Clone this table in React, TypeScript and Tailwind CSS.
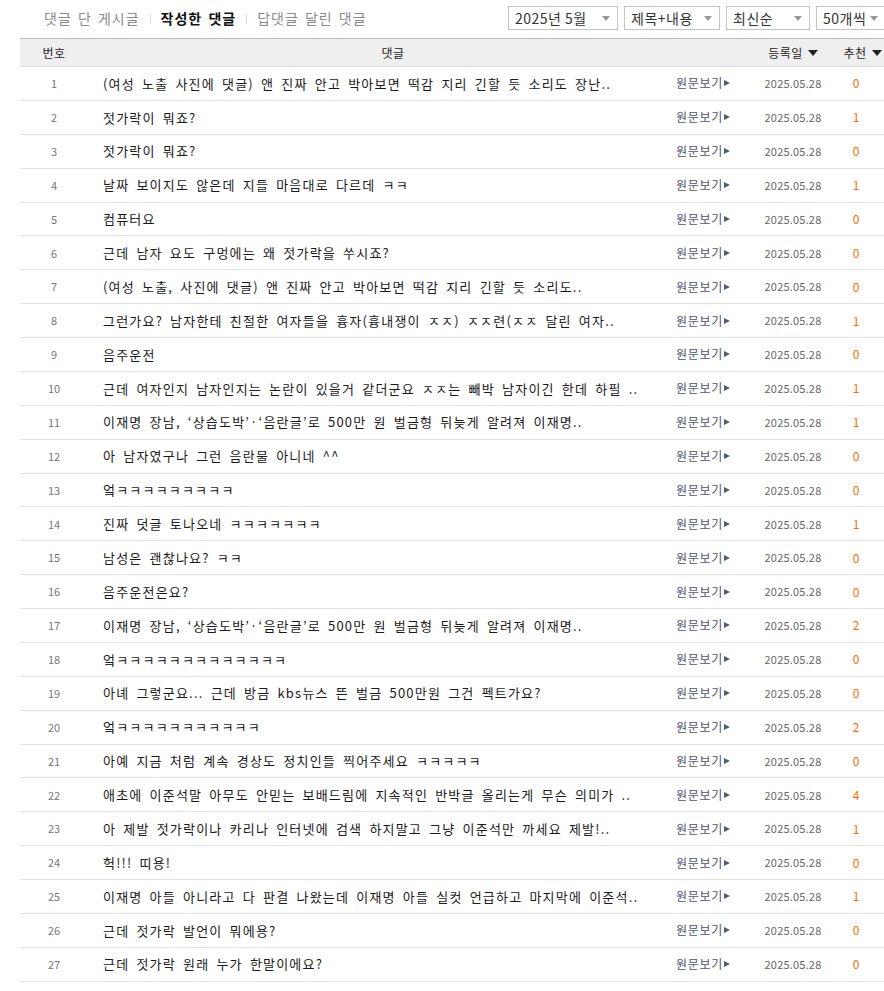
const rows: [string, number][] = [
  ['(여성 노출 사진에 댓글) 앤 진짜 안고 박아보면 떡감 지리 긴할 듯 소리도 장난..', 0],
  ['젓가락이 뭐죠?', 1],
  ['젓가락이 뭐죠?', 0],
  ['날짜 보이지도 않은데 지들 마음대로 다르데 ㅋㅋ', 1],
  ['컴퓨터요', 0],
  ['근데 남자 요도 구멍에는 왜 젓가락을 쑤시죠?', 0],
  ['(여성 노출, 사진에 댓글) 앤 진짜 안고 박아보면 떡감 지리 긴할 듯 소리도..', 0],
  ['그런가요? 남자한테 친절한 여자들을 흉자(흉내쟁이 ㅈㅈ) ㅈㅈ련(ㅈㅈ 달린 여자..', 1],
  ['음주운전', 0],
  ['근데 여자인지 남자인지는 논란이 있을거 같더군요 ㅈㅈ는 빼박 남자이긴 한데 하필 ..', 1],
  ['이재명 장남, ‘상습도박’·‘음란글’로 500만 원 벌금형 뒤늦게 알려져 이재명..', 1],
  ['아 남자였구나 그런 음란물 아니네 ^^', 0],
  ['엌ㅋㅋㅋㅋㅋㅋㅋㅋㅋ', 0],
  ['진짜 덧글 토나오네 ㅋㅋㅋㅋㅋㅋㅋ', 1],
  ['남성은 괜찮나요? ㅋㅋ', 0],
  ['음주운전은요?', 0],
  ['이재명 장남, ‘상습도박’·‘음란글’로 500만 원 벌금형 뒤늦게 알려져 이재명..', 2],
  ['엌ㅋㅋㅋㅋㅋㅋㅋㅋㅋㅋㅋㅋㅋ', 0],
  ['아녜 그렇군요... 근데 방금 kbs뉴스 뜬 벌금 500만원 그건 펙트가요?', 0],
  ['엌ㅋㅋㅋㅋㅋㅋㅋㅋㅋㅋㅋ', 2],
  ['아예 지금 처럼 계속 경상도 정치인들 찍어주세요 ㅋㅋㅋㅋㅋ', 0],
  ['애초에 이준석말 아무도 안믿는 보배드림에 지속적인 반박글 올리는게 무슨 의미가 ..', 4],
  ['아 제발 젓가락이나 카리나 인터넷에 검색 하지말고 그냥 이준석만 까세요 제발!..', 1],
  ['헉!!! 띠용!', 0],
  ['이재명 아들 아니라고 다 판결 나왔는데 이재명 아들 실컷 언급하고 마지막에 이준석..', 1],
  ['근데 젓가락 발언이 뭐에용?', 0],
  ['근데 젓가락 원래 누가 한말이에요?', 0],
]

const font = { fontFamily: '"Noto Sans CJK KR", "Liberation Sans", sans-serif' }

function SelectBox({ label, width }: { label: string; width: string }) {
  return (
    <div
      className={`${width} h-[24px] shrink-0 flex items-center justify-between border border-[#c4c4c4] bg-white pl-[6px] pr-[7px] text-[14px] tracking-[0.5px] text-[#333]`}
    >
      <span className="leading-none">{label}</span>
      <span className="w-0 h-0 border-l-[4px] border-r-[4px] border-t-[5px] border-l-transparent border-r-transparent border-t-[#999]" />
    </div>
  )
}

function SortArrow() {
  return (
    <span className="inline-block ml-[5px] w-0 h-0 border-l-[5px] border-r-[5px] border-t-[6px] border-l-transparent border-r-transparent border-t-[#222] align-middle" />
  )
}

export default function App() {
  return (
    <div className="w-full overflow-hidden bg-white" style={font}>
      <div className="w-[900px]">
        <div className="flex items-center h-[38px] pb-[2px]">
          <div className="flex items-center pl-[44px] text-[14px] tracking-[1px] [word-spacing:2px] text-[#8a8a8a] w-[508px]">
            <span>댓글 단 게시글</span>
            <span className="mx-[10px] w-px h-[11px] bg-[#ddd]" />
            <span className="font-bold text-[#111]">작성한 댓글</span>
            <span className="mx-[10px] w-px h-[11px] bg-[#ddd]" />
            <span>답댓글 달린 댓글</span>
          </div>
          <div className="flex items-center gap-[6px]">
            <SelectBox label="2025년 5월" width="w-[110px]" />
            <SelectBox label="제목+내용" width="w-[96px]" />
            <SelectBox label="최신순" width="w-[84px]" />
            <SelectBox label="50개씩" width="w-[70px]" />
          </div>
        </div>

        <div className="ml-[20px] w-[870px]">
          <div className="flex items-center h-[29px] border-t border-t-[#bdbdbd] border-b border-b-[#dcdcdc] bg-[#efefef] text-[12px] tracking-[0.5px] text-[#222]">
            <div className="w-[68px] text-center">번호</div>
            <div className="w-[610px] text-center">댓글</div>
            <div className="w-[47px]" />
            <div className="w-[96px] text-center flex items-center justify-center">
              등록일
              <SortArrow />
            </div>
            <div className="w-[43px] flex items-center justify-center">
              추천
              <SortArrow />
            </div>
          </div>

          {rows.map(([text, rec], i) => (
            <div key={i} className="flex items-center h-[33.88px] border-b border-[#e2e2e2]">
              <div className="w-[68px] text-center text-[11px] text-[#777]">{i + 1}</div>
              <div className="w-[572px] pl-[15px] text-[13px] tracking-[1.2px] [word-spacing:3px] text-[#1a1a1a] whitespace-nowrap overflow-hidden">
                {text}
              </div>
              <div className="w-[85px] pl-[16px] flex items-center text-[12px] tracking-[0.7px] text-[#4e5572]">
                원문보기
                <span className="ml-[1px] w-0 h-0 border-t-[3.5px] border-b-[3.5px] border-l-[6px] border-t-transparent border-b-transparent border-l-[#555a6e]" />
              </div>
              <div className="w-[96px] text-center text-[11px] tracking-[0.2px] text-[#666]">2025.05.28</div>
              <div className="w-[30px] text-center text-[12px] text-[#ff6a00]">{rec}</div>
            </div>
          ))}
        </div>
      </div>
    </div>
  )
}
